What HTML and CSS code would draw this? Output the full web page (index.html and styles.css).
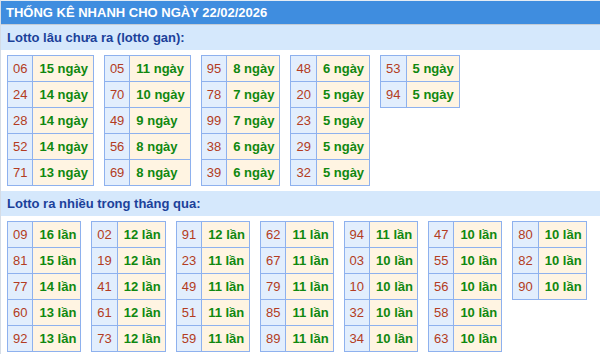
FILE: index.html
```html
<!DOCTYPE html>
<html lang="vi">
<head>
<meta charset="utf-8">
<link rel="stylesheet" href="styles.css">
</head>
<body>
<div class="box">
  <div class="title">THỐNG KÊ NHANH CHO NGÀY 22/02/2026</div>
  <div class="sec">Lotto lâu chưa ra (lotto gan):</div>
  <div class="group gan">
    <table><tr><td class="n">06</td><td class="v">15 ngày</td></tr><tr><td class="n">24</td><td class="v">14 ngày</td></tr><tr><td class="n">28</td><td class="v">14 ngày</td></tr><tr><td class="n">52</td><td class="v">14 ngày</td></tr><tr><td class="n">71</td><td class="v">13 ngày</td></tr></table>
    <table><tr><td class="n">05</td><td class="v">11 ngày</td></tr><tr><td class="n">70</td><td class="v">10 ngày</td></tr><tr><td class="n">49</td><td class="v">9 ngày</td></tr><tr><td class="n">56</td><td class="v">8 ngày</td></tr><tr><td class="n">69</td><td class="v">8 ngày</td></tr></table>
    <table><tr><td class="n">95</td><td class="v">8 ngày</td></tr><tr><td class="n">78</td><td class="v">7 ngày</td></tr><tr><td class="n">99</td><td class="v">7 ngày</td></tr><tr><td class="n">38</td><td class="v">6 ngày</td></tr><tr><td class="n">39</td><td class="v">6 ngày</td></tr></table>
    <table><tr><td class="n">48</td><td class="v">6 ngày</td></tr><tr><td class="n">20</td><td class="v">5 ngày</td></tr><tr><td class="n">23</td><td class="v">5 ngày</td></tr><tr><td class="n">29</td><td class="v">5 ngày</td></tr><tr><td class="n">32</td><td class="v">5 ngày</td></tr></table>
    <table><tr><td class="n">53</td><td class="v">5 ngày</td></tr><tr><td class="n">94</td><td class="v">5 ngày</td></tr></table>
  </div>
  <div class="sec">Lotto ra nhiều trong tháng qua:</div>
  <div class="group">
    <table><tr><td class="n">09</td><td class="v">16 lần</td></tr><tr><td class="n">81</td><td class="v">15 lần</td></tr><tr><td class="n">77</td><td class="v">14 lần</td></tr><tr><td class="n">60</td><td class="v">13 lần</td></tr><tr><td class="n">92</td><td class="v">13 lần</td></tr></table>
    <table><tr><td class="n">02</td><td class="v">12 lần</td></tr><tr><td class="n">19</td><td class="v">12 lần</td></tr><tr><td class="n">41</td><td class="v">12 lần</td></tr><tr><td class="n">61</td><td class="v">12 lần</td></tr><tr><td class="n">73</td><td class="v">12 lần</td></tr></table>
    <table><tr><td class="n">91</td><td class="v">12 lần</td></tr><tr><td class="n">23</td><td class="v">11 lần</td></tr><tr><td class="n">49</td><td class="v">11 lần</td></tr><tr><td class="n">51</td><td class="v">11 lần</td></tr><tr><td class="n">59</td><td class="v">11 lần</td></tr></table>
    <table><tr><td class="n">62</td><td class="v">11 lần</td></tr><tr><td class="n">67</td><td class="v">11 lần</td></tr><tr><td class="n">79</td><td class="v">11 lần</td></tr><tr><td class="n">85</td><td class="v">11 lần</td></tr><tr><td class="n">89</td><td class="v">11 lần</td></tr></table>
    <table><tr><td class="n">94</td><td class="v">11 lần</td></tr><tr><td class="n">03</td><td class="v">10 lần</td></tr><tr><td class="n">10</td><td class="v">10 lần</td></tr><tr><td class="n">32</td><td class="v">10 lần</td></tr><tr><td class="n">34</td><td class="v">10 lần</td></tr></table>
    <table><tr><td class="n">47</td><td class="v">10 lần</td></tr><tr><td class="n">55</td><td class="v">10 lần</td></tr><tr><td class="n">56</td><td class="v">10 lần</td></tr><tr><td class="n">58</td><td class="v">10 lần</td></tr><tr><td class="n">63</td><td class="v">10 lần</td></tr></table>
    <table><tr><td class="n">80</td><td class="v">10 lần</td></tr><tr><td class="n">82</td><td class="v">10 lần</td></tr><tr><td class="n">90</td><td class="v">10 lần</td></tr></table>
  </div>
</div>
</body>
</html>
```
FILE: styles.css
```css
html, body { margin: 0; padding: 0; background: #fff; }
body { font-family: "Liberation Sans", Arial, sans-serif; font-size: 13px; }
.box {
  border-top: 1px solid #e4ecf4;
  border-left: 1px solid #d4dce6;
}
.title {
  background: #3f8ddf;
  color: #fff;
  font-weight: bold;
  font-size: 13px;
  height: 23px;
  line-height: 23px;
  padding-left: 5px;
  border-bottom: 1px solid #c4ccd6;
}
.sec {
  background: #d5e8fc;
  color: #1b419a;
  font-weight: bold;
  font-size: 13px;
  height: 25px;
  line-height: 25px;
  padding-left: 6px;
}
.group {
  display: flex;
  align-items: flex-start;
  gap: 10px;
  padding: 5px 0 5px 6px;
}
table {
  border-collapse: collapse;
  border: 1px solid #8eb1ee;
}
td {
  border: 1px solid #8eb1ee;
  height: 26px;
  box-sizing: border-box;
  font-size: 13px;
  white-space: nowrap;
}
td.n {
  background: #e2eefd;
  color: #b33c22;
  text-align: center;
  padding: 0 5px;
}
td.v {
  background: #fff4e2;
  color: #108810;
  font-weight: bold;
  padding: 0 4px 0 6px;
}
.gan td.v {
  padding-right: 5px;
}
```
